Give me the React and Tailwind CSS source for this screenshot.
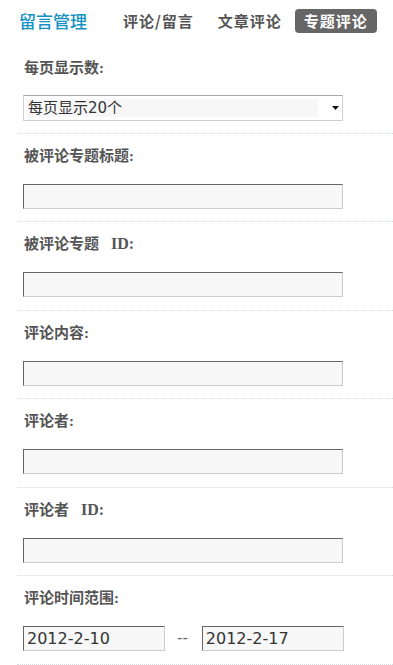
import React from "react";

const labelFont = {
  fontFamily: '"Liberation Serif", "Noto Sans CJK SC", serif',
};

function Field() {
  return (
    <div className="h-[25px] w-[320px] border border-t-[#666] border-l-[#666] border-r-[#ccc] border-b-[#ccc] bg-[#f7f7f7]" />
  );
}

// one form block, separated by a dotted line at the bottom
function Row({ label, h, children }) {
  return (
    <div className={`${h} border-b border-dotted border-[#d4dbe3] px-[6px] pt-[12px]`}>
      <div className="h-[20px] text-[15px] leading-[20px] font-bold text-[#555] ml-[1px]">
        {label}
      </div>
      <div className="mt-[18px]">{children || <Field />}</div>
    </div>
  );
}

export default function App() {
  return (
    <div className="w-[393px] h-[665px] overflow-hidden bg-white font-['Liberation_Sans','Noto_Sans_CJK_SC',sans-serif]">
      {/* header tabs */}
      <div className="flex h-[42px] items-start pt-[9px]">
        <span className="ml-[19px] text-[17px] leading-[24px] font-medium text-[#1592c4] font-['Noto_Sans_CJK_SC',sans-serif]">
          留言管理
        </span>
        <span className="ml-[36px] text-[15px] leading-[24px] tracking-[1px] font-bold text-[#555] font-['Noto_Sans_CJK_SC',sans-serif]">
          评论/留言
        </span>
        <span className="ml-[24px] text-[15px] leading-[24px] tracking-[1px] font-bold text-[#555] font-['Noto_Sans_CJK_SC',sans-serif]">
          文章评论
        </span>
        <span className="ml-[13px] rounded-[4px] bg-[#666] px-[9px] text-[15px] leading-[24px] tracking-[1px] font-bold text-white font-['Noto_Sans_CJK_SC',sans-serif]">
          专题评论
        </span>
      </div>

      <div className="ml-[17px]">
        {/* per page */}
        <div className="h-[92px] border-b border-dotted border-[#d4dbe3] px-[6px] pt-[16px]">
          <div className="h-[20px] text-[15px] leading-[20px] font-bold text-[#555] ml-[1px]" style={labelFont}>
            每页显示数:
          </div>
          <div className="mt-[17px] flex h-[26px] w-[320px] items-center border border-[#cfcfcf] border-t-[#a8a8a8] px-[3px]">
            <div className="h-[18px] w-[291px] bg-[#f7f7f7] pl-[1px] text-[15px] leading-[18px] text-[#333] font-['DejaVu_Sans','Noto_Sans_CJK_SC',sans-serif]">
              每页显示20个
            </div>
            <svg className="ml-[14px]" width="7" height="4" viewBox="0 0 7 4">
              <path d="M0 0h7L3.5 4z" fill="#111" />
            </svg>
          </div>
        </div>

        <div style={labelFont}>
          <Row h="h-[88px]" label="被评论专题标题:" />
          <Row
            h="h-[89px]"
            label={
              <>
                被评论专题<span className="ml-[12px] text-[16px]">ID:</span>
              </>
            }
          />
          <Row h="h-[88px]" label="评论内容:" />
          <Row h="h-[89px]" label="评论者:" />
          <Row
            h="h-[88px]"
            label={
              <>
                评论者<span className="ml-[12px] text-[16px]">ID:</span>
              </>
            }
          />
          <Row h="h-[89px]" label="评论时间范围:">
            <div className="flex items-center font-['DejaVu_Sans',sans-serif]">
              <div className="h-[25px] w-[142px] border border-t-[#666] border-l-[#666] border-r-[#ccc] border-b-[#ccc] bg-[#f7f7f7] pl-[3px] text-[16px] leading-[23px] text-[#333]">
                2012-2-10
              </div>
              <span className="ml-[12px] mr-[14px] text-[15px] text-[#666]">--</span>
              <div className="h-[25px] w-[142px] border border-t-[#666] border-l-[#666] border-r-[#ccc] border-b-[#ccc] bg-[#f7f7f7] pl-[3px] text-[16px] leading-[23px] text-[#333]">
                2012-2-17
              </div>
            </div>
          </Row>
        </div>
      </div>
    </div>
  );
}
